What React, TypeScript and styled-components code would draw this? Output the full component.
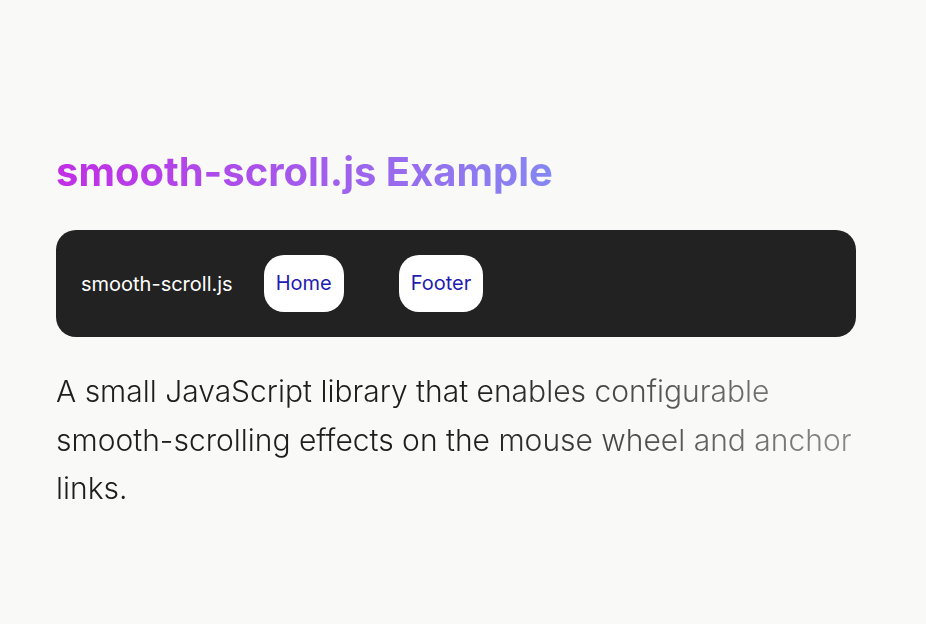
import styled, { createGlobalStyle } from 'styled-components';

const GlobalStyle = createGlobalStyle`
  html, body {
    margin: 0;
    padding: 0;
    background: #f9f9f7;
  }
  body {
    font-family: Inter, "Noto Sans", sans-serif;
  }
`;

const Page = styled.main`
  width: 800px;
  padding: 148px 0 0 56px;
`;

const Title = styled.h1`
  margin: 0 0 34px;
  font-size: 40px;
  font-weight: 700;
  line-height: 48px;
  display: inline-block;
  background: linear-gradient(to right, #c22ee6, #8587f2);
  -webkit-background-clip: text;
  background-clip: text;
  color: transparent;
`;

const Nav = styled.nav`
  display: flex;
  align-items: center;
  height: 107px;
  box-sizing: border-box;
  padding: 0 25px;
  background: #222222;
  border-radius: 20px;
`;

const Brand = styled.span`
  color: #ffffff;
  font-size: 20px;
  margin-right: 31px;
`;

const NavList = styled.ul`
  display: flex;
  gap: 55px;
  list-style: none;
  margin: 0;
  padding: 0;
`;

const NavLink = styled.a`
  display: block;
  padding: 16px 12px;
  font-size: 20px;
  line-height: 25px;
  color: #1f1cb0;
  background: #ffffff;
  border-radius: 20px;
  text-decoration: none;
`;

const Lead = styled.p`
  margin: 30px 0 0;
  font-size: 30px;
  font-weight: 300;
  line-height: 48.5px;
  background: linear-gradient(to right, #1e1e1e 0%, #1e1e1e 52%, #8c8c8c 100%);
  -webkit-background-clip: text;
  background-clip: text;
  color: transparent;
`;

export default function App() {
  return (
    <>
      <GlobalStyle />
      <Page>
        <Title>smooth-scroll.js Example</Title>
        <Nav>
          <Brand>smooth-scroll.js</Brand>
          <NavList>
            <li><NavLink href="#home">Home</NavLink></li>
            <li><NavLink href="#footer">Footer</NavLink></li>
          </NavList>
        </Nav>
        <Lead>
          A small JavaScript library that enables configurable smooth-scrolling effects on the mouse wheel and anchor links.
        </Lead>
      </Page>
    </>
  );
}
